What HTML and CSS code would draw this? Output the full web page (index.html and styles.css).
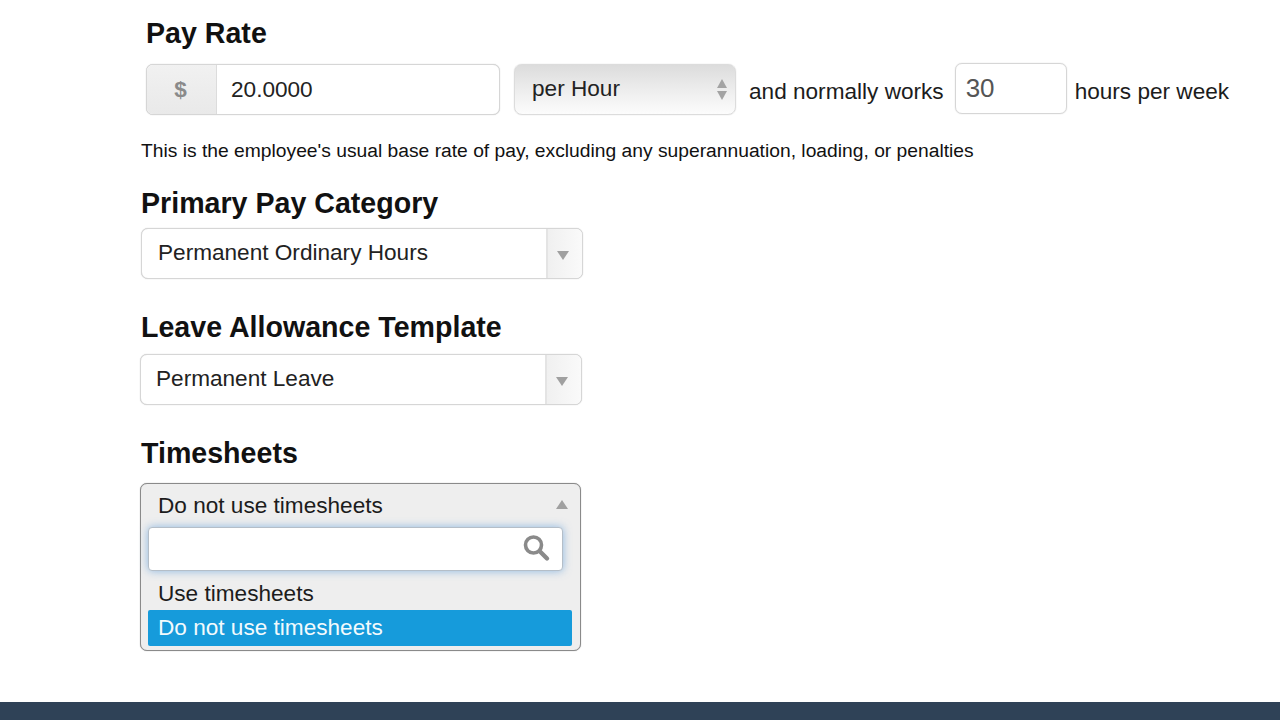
FILE: index.html
```html
<!DOCTYPE html>
<html lang="en">
<head>
  <meta charset="UTF-8">
  <title>Pay Rate</title>
  <link rel="stylesheet" href="styles.css">
</head>
<body>
  <div class="container">
    <div class="pay-section">
      <h2>Pay Rate</h2>
      <div class="pay-row">
        <div class="input-group">
          <span class="addon">$</span>
          <span class="rate">20.0000</span>
        </div>
        <div class="unit-select">
          <span>per Hour</span>
          <svg class="spinner" width="12" height="22" viewBox="0 0 12 22">
            <path d="M6 1 L11 10 H1 Z" fill="#a3a3a3"/>
            <path d="M1 13 H11 L6 22 Z" fill="#a3a3a3"/>
          </svg>
        </div>
        <span class="row-text first">and normally works</span>
        <div class="hours">30</div>
        <span class="row-text">hours per week</span>
      </div>
    </div>

    <p class="hint">This is the employee's usual base rate of pay, excluding any superannuation, loading, or penalties</p>

    <h2 class="category-title">Primary Pay Category</h2>
    <div class="dropdown category">
      <span class="dropdown-value">Permanent Ordinary Hours</span>
      <span class="arrow-box"><span class="arrow-down"></span></span>
    </div>

    <h2 class="leave-title">Leave Allowance Template</h2>
    <div class="dropdown leave">
      <span class="dropdown-value">Permanent Leave</span>
      <span class="arrow-box"><span class="arrow-down"></span></span>
    </div>

    <h2 class="timesheets-title">Timesheets</h2>
    <div class="open-dropdown">
      <div class="open-head">
        <span>Do not use timesheets</span>
        <span class="arrow-up"></span>
      </div>
      <div class="search">
        <svg width="30" height="30" viewBox="0 0 30 30">
          <circle cx="12.5" cy="12" r="8" fill="none" stroke="#8a8a8a" stroke-width="3.6"/>
          <path d="M18.5 18 L26 25.5" stroke="#8a8a8a" stroke-width="4.4" stroke-linecap="round"/>
        </svg>
      </div>
      <ul class="options">
        <li>Use timesheets</li>
        <li class="selected">Do not use timesheets</li>
      </ul>
    </div>
  </div>
  <div class="footer"></div>
</body>
</html>
```

FILE: styles.css
```css
* {
  box-sizing: border-box;
}

body {
  font-family: "Liberation Sans", Arial, sans-serif;
  background: #ffffff;
  color: #1c1c1c;
  margin: 0;
  height: 720px;
  display: flex;
  flex-direction: column;
  overflow: hidden;
}

.container {
  flex: 1;
  padding: 0 0 0 141px;
}

h2 {
  font-size: 28.6px;
  line-height: 32px;
  font-weight: bold;
  color: #111;
  margin: 0;
}

.pay-section {
  margin-left: 5px;
  padding-top: 17px;
}

.pay-row {
  display: flex;
  align-items: flex-start;
  margin-top: 15px;
  font-size: 22.6px;
}

.input-group {
  width: 354px;
  height: 51px;
  display: flex;
  border: 1px solid #d6d6d6;
  border-radius: 7px;
  box-shadow: 0 0 1px rgba(0, 0, 0, 0.25);
  overflow: hidden;
  background: #fff;
}

.addon {
  width: 70px;
  padding-right: 2px;
  background: linear-gradient(#f1f1f1, #e9e9e9);
  border-right: 1px solid #dcdcdc;
  color: #8a8a8a;
  font-weight: bold;
  text-align: center;
  line-height: 49px;
}

.rate {
  padding-left: 14px;
  line-height: 49px;
  color: #222;
}

.unit-select {
  width: 222px;
  height: 51px;
  margin-left: 14px;
  padding: 0 7px 1px 17px;
  border: 1px solid #dcdcdc;
  border-radius: 8px;
  box-shadow: 0 0 1px rgba(0, 0, 0, 0.25);
  background: linear-gradient(#dcdcdc, #f0f0f0 60%, #fcfcfc);
  display: flex;
  align-items: center;
  justify-content: space-between;
  color: #222;
}

.row-text {
  line-height: 56px;
  color: #1c1c1c;
}

.row-text.first {
  margin-left: 13px;
  margin-right: 11px;
}

.hours {
  width: 112px;
  height: 51px;
  margin-top: -1px;
  margin-right: 8px;
  padding-left: 10px;
  border: 1px solid #d6d6d6;
  border-radius: 7px;
  box-shadow: 0 0 1px rgba(0, 0, 0, 0.25);
  font-size: 26px;
  line-height: 49px;
  color: #555;
}

.hint {
  font-size: 19.25px;
  line-height: 24px;
  color: #111;
  margin: 19px 0 0 0;
}

.category-title {
  margin-top: 24px;
}

.dropdown {
  width: 442px;
  height: 51px;
  display: flex;
  justify-content: space-between;
  border: 1px solid #d6d6d6;
  border-radius: 7px;
  box-shadow: 0 0 1px rgba(0, 0, 0, 0.25);
  background: #fff;
  overflow: hidden;
  font-size: 22.6px;
}

.category {
  margin-top: 9px;
}

.leave {
  margin-top: 11px;
  margin-left: -1px;
}

.dropdown-value {
  padding-left: 16px;
  line-height: 48px;
  color: #222;
}

.leave .dropdown-value {
  padding-left: 15px;
}

.arrow-box {
  width: 36px;
  border-left: 2px solid #e4e4e4;
  background: linear-gradient(90deg, #f0f0f0, #fafafa);
  display: flex;
  align-items: center;
  justify-content: center;
}

.arrow-down {
  width: 0;
  height: 0;
  border-left: 6px solid transparent;
  border-right: 6px solid transparent;
  border-top: 9px solid #a0a0a0;
  margin: 3px 4px 0 0;
}

.leave-title {
  margin-top: 32px;
}

.timesheets-title {
  margin-top: 32px;
}

.open-dropdown {
  width: 441px;
  height: 168px;
  margin-top: 14px;
  margin-left: -1px;
  border: 1px solid #8a8a8a;
  border-radius: 7px;
  box-shadow: 0 0 1px rgba(0, 0, 0, 0.4);
  background: #eeeeee;
  font-size: 22.6px;
  padding: 0 8px 0 7px;
}

.open-head {
  height: 43px;
  padding: 0 4px 0 10px;
  display: flex;
  align-items: center;
  justify-content: space-between;
  color: #1c1c1c;
}

.arrow-up {
  width: 0;
  height: 0;
  border-left: 6px solid transparent;
  border-right: 6px solid transparent;
  border-bottom: 9px solid #a0a0a0;
  margin-top: -2px;
}

.search {
  width: 415px;
  height: 44px;
  background: #fff;
  border: 1px solid #b4bec8;
  border-radius: 4px;
  box-shadow: 0 0 8px rgba(100, 160, 220, 0.7);
  display: flex;
  align-items: center;
  justify-content: flex-end;
  padding-right: 11px;
}

.search svg {
  margin-top: -2px;
}

.options {
  list-style-type: none;
  margin: 4px 0 0 0;
  padding: 0;
}

.options li {
  height: 35px;
  line-height: 38px;
  padding-left: 10px;
  color: #1c1c1c;
}

.options li.selected {
  height: 36px;
  line-height: 35px;
  background: #169bdb;
  color: #f2fafd;
  border-radius: 2px;
}

.footer {
  height: 18px;
  background: #2f4257;
}
```
